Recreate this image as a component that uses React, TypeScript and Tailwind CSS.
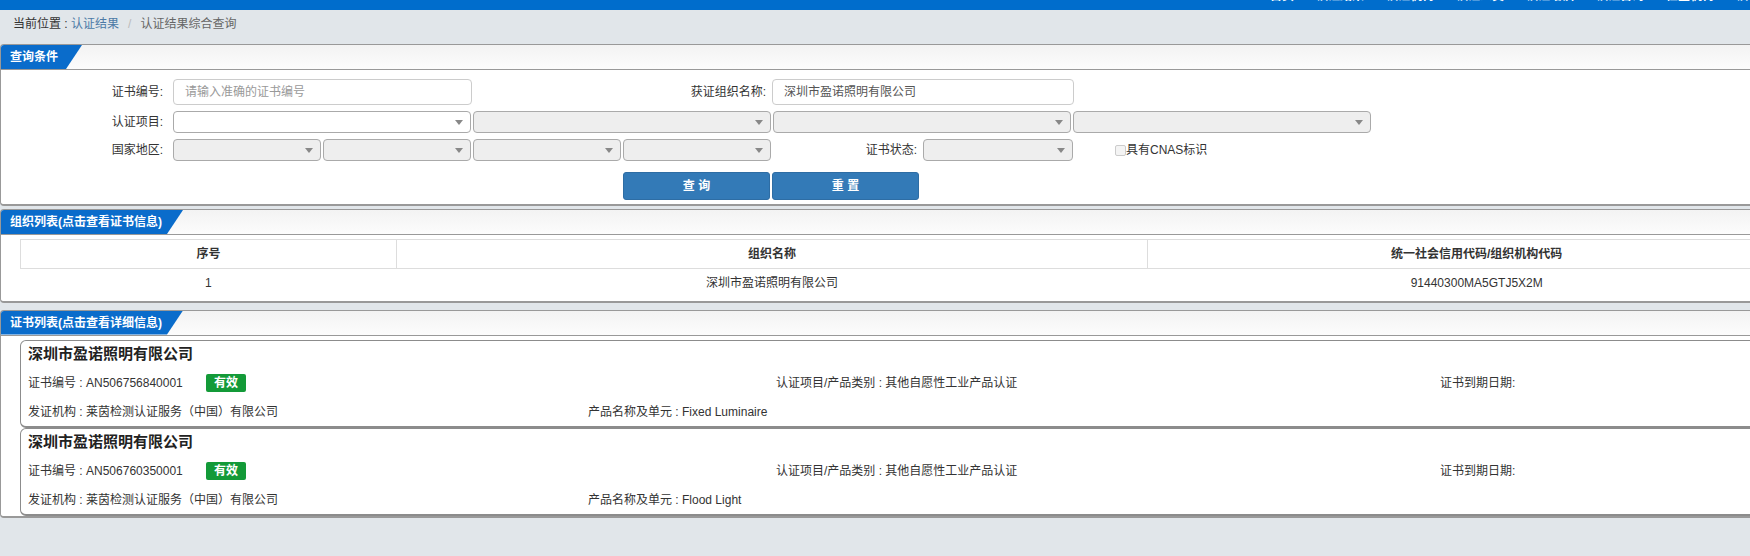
import type { ReactNode } from "react";

const FONT = { fontFamily: '"Liberation Sans", Arial, "Noto Sans CJK SC", sans-serif' };

const navItems = ["首页", "认证结果", "认证机构", "认证人员", "认证培训", "认证咨询", "检查机构", "认可信息"];

// 面板：蓝色斜角标签 + 灰色边框
function Panel({ title, tabW, className, children }: { title: string; tabW: string; className?: string; children: ReactNode }) {
  return (
    <section className={`border border-b-2 border-[#999] rounded-l-[4px] bg-white ${className ?? ""}`}>
      <div className="h-[25px] border-b border-[#999] bg-linear-to-b from-[#f3f3f3] to-[#fcfcfc] rounded-tl-[4px]">
        <div
          className={`${tabW} h-[24px] bg-[#0a6ccb] rounded-tl-[3px] flex items-center pl-[9px] text-white text-[12px] font-bold [clip-path:polygon(0_0,100%_0,calc(100%-16px)_100%,0_100%)]`}
        >
          {title}
        </div>
      </div>
      {children}
    </section>
  );
}

function Select({ w, white }: { w: string; white?: boolean }) {
  return (
    <div
      className={`${w} h-[22px] mr-[2px] border border-[#aaa] rounded-[4px] flex items-center justify-end pr-[7px] ${white ? "bg-white" : "bg-[#eee]"}`}
    >
      <span className="w-0 h-0 border-x-[4px] border-t-[5px] border-x-transparent border-t-[#888]" />
    </div>
  );
}

function CertCard({ no, product }: { no: string; product: string }) {
  return (
    <div className="ml-[19px] border border-b-2 border-[#8c8c8c] rounded-l-[6px] pt-[4px] pb-[4px] px-[7px] text-[12px] text-[#333]">
      <div className="h-[18px] leading-[18px] text-[15px] font-bold text-[#222]">深圳市盈诺照明有限公司</div>
      <div className="mt-[10px] h-[20px] flex items-center">
        <div className="w-[748px] flex items-center">
          <span className="w-[178px]">证书编号 : {no}</span>
          <span className="w-[40px] h-[18px] bg-[#139a38] text-white font-bold rounded-[2px] flex items-center justify-center">有效</span>
        </div>
        <div className="w-[664px]">认证项目/产品类别 : 其他自愿性工业产品认证</div>
        <div>证书到期日期:</div>
      </div>
      <div className="mt-[9px] h-[20px] flex items-center">
        <div className="w-[560px]">发证机构 : 莱茵检测认证服务（中国）有限公司</div>
        <div>产品名称及单元 : {product}</div>
      </div>
    </div>
  );
}

export default function App() {
  return (
    <div className="w-full min-h-[556px] overflow-hidden bg-[#e1e6ea]" style={FONT}>
      <div className="w-[1920px]">
        {/* 顶部导航 */}
        <div className="h-[10px] bg-[#006dcc] overflow-hidden">
          <div className="flex gap-[22px] pl-[1270px] -mt-[11px] text-white text-[12px] leading-[14px] font-bold">
            {navItems.map((n) => (
              <span key={n}>{n}</span>
            ))}
          </div>
        </div>

        {/* 面包屑 */}
        <div className="h-[34px] flex items-center pb-[6px] pl-[13px] text-[12px]">
          <span className="text-[#333]">当前位置 :&nbsp;</span>
          <span className="text-[#4c7aa6]">认证结果</span>
          <span className="text-[#bbb] px-[9px]">/</span>
          <span className="text-[#666]">认证结果综合查询</span>
        </div>

        {/* 查询条件 */}
        <Panel title="查询条件" tabW="w-[81px]">
          <div className="pt-[9px] pb-[4px] text-[12px] text-[#333]">
            <div className="flex items-center h-[26px]">
              <label className="w-[162px] text-right">证书编号:</label>
              <div className="ml-[10px] w-[299px] h-[26px] border border-[#ccc] rounded-[4px] flex items-center pl-[11px] text-[#999]">
                请输入准确的证书编号
              </div>
              <label className="w-[294px] text-right">获证组织名称:</label>
              <div className="ml-[6px] w-[302px] h-[26px] border border-[#ccc] rounded-[4px] flex items-center pl-[11px] text-[#555]">
                深圳市盈诺照明有限公司
              </div>
            </div>
            <div className="flex items-center mt-[6px]">
              <label className="w-[162px] text-right">认证项目:</label>
              <div className="ml-[10px] flex">
                <Select w="w-[298px]" white />
                <Select w="w-[298px]" />
                <Select w="w-[298px]" />
                <Select w="w-[298px]" />
              </div>
            </div>
            <div className="flex items-center mt-[6px]">
              <label className="w-[162px] text-right">国家地区:</label>
              <div className="ml-[10px] flex">
                <Select w="w-[148px]" />
                <Select w="w-[148px]" />
                <Select w="w-[148px]" />
                <Select w="w-[148px]" />
              </div>
              <label className="w-[144px] text-right">证书状态:</label>
              <div className="ml-[6px] flex">
                <Select w="w-[150px]" />
              </div>
              <span className="ml-[40px] w-[11px] h-[11px] border border-[#ccc] rounded-[2px] bg-[#f4f4f4]" />
              <span>具有CNAS标识</span>
            </div>
            <div className="flex mt-[11px] pl-[622px] gap-[2px]">
              <button className="w-[147px] h-[28px] bg-[#337ab7] border border-[#2e6da4] rounded-[3px] text-white text-[12px] font-bold">
                查 询
              </button>
              <button className="w-[147px] h-[28px] bg-[#337ab7] border border-[#2e6da4] rounded-[3px] text-white text-[12px] font-bold">
                重 置
              </button>
            </div>
          </div>
        </Panel>

        {/* 组织列表 */}
        <Panel title="组织列表(点击查看证书信息)" tabW="w-[182px]" className="mt-[3px]">
          <div className="pt-[4px] pb-[3px] pl-[19px]">
            <table className="w-[1880px] border-collapse text-[12px] text-[#333] table-fixed">
              <thead>
                <tr className="h-[29px]">
                  <th className="w-[20%] border border-[#ddd] font-bold">序号</th>
                  <th className="w-[40%] border border-[#ddd] font-bold">组织名称</th>
                  <th className="w-[35%] border border-[#ddd] font-bold">统一社会信用代码/组织机构代码</th>
                  <th className="w-[5%] border border-[#ddd] font-bold"></th>
                </tr>
              </thead>
              <tbody>
                <tr className="h-[29px] text-center">
                  <td>1</td>
                  <td>深圳市盈诺照明有限公司</td>
                  <td>91440300MA5GTJ5X2M</td>
                  <td></td>
                </tr>
              </tbody>
            </table>
          </div>
        </Panel>

        {/* 证书列表 */}
        <Panel title="证书列表(点击查看详细信息)" tabW="w-[182px]" className="mt-[7px]">
          <div className="pt-[4px]">
            <CertCard no="AN506756840001" product="Fixed Luminaire" />
            <CertCard no="AN506760350001" product="Flood Light" />
          </div>
        </Panel>
      </div>
    </div>
  );
}
